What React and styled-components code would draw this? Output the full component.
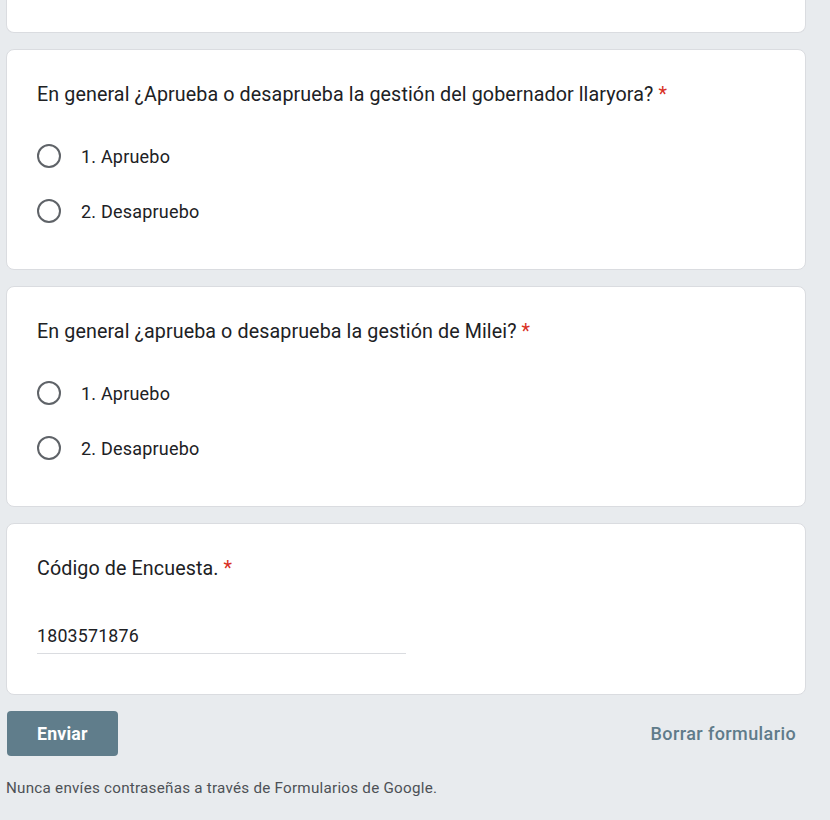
import React from "react";
import styled, { createGlobalStyle } from "styled-components";

const Global = createGlobalStyle`
  html, body { margin: 0; padding: 0; background: #e8ebee; }
  body { font-family: Roboto, "Noto Sans", Arial, sans-serif; color: #202124; }
`;

const Page = styled.div`
  width: 800px;
  padding-left: 6px;
  display: flex;
  flex-direction: column;
  gap: 16px;
`;

const Card = styled.div`
  background: #fff;
  border: 1px solid #dadce0;
  border-radius: 8px;
  box-sizing: border-box;
  padding: 31px 30px 24px 30px;
  display: flex;
  flex-direction: column;
`;

const ClippedCard = styled(Card)`
  height: 33px;
  border-top: none;
  border-top-left-radius: 0;
  border-top-right-radius: 0;
  padding: 0;
`;

const Title = styled.div`
  font-size: 19.7px;
  line-height: 28px;
  letter-spacing: 0.1px;
  color: #202124;
  margin-bottom: ${(p) => p.$mb || 23}px;
`;

const Star = styled.span`
  color: #d93025;
  padding-left: 5px;
`;

const Options = styled.div`
  display: flex;
  flex-direction: column;
  gap: 7px;
  margin-bottom: 10px;
`;

const Option = styled.label`
  display: flex;
  align-items: center;
  height: 48px;
  gap: 20px;
  font-size: 18px;
  letter-spacing: 0.2px;
  color: #202124;
`;

const Radio = styled.span`
  width: 24px;
  height: 24px;
  box-sizing: border-box;
  border: 2px solid #5f6368;
  border-radius: 50%;
  flex-shrink: 0;
`;

const InputWrap = styled.div`
  width: 369px;
  border-bottom: 1px solid #dadce0;
  padding: 4px 0 4px;
  font-size: 17.8px;
  line-height: 26px;
  letter-spacing: 0.2px;
  color: #202124;
  margin-bottom: 16px;
`;

const Actions = styled.div`
  display: flex;
  justify-content: space-between;
  align-items: center;
  padding-left: 1px;
  padding-right: 10px;
`;

const Submit = styled.button`
  width: 111px;
  height: 45px;
  border: none;
  border-radius: 4px;
  background: #607d8b;
  color: #fff;
  font-family: Roboto, Arial, sans-serif;
  font-weight: 700;
  font-size: 17.7px;
  letter-spacing: 0.2px;
  text-align: left;
  padding: 0 0 0 30px;
`;

const Clear = styled.span`
  color: #5f7b8a;
  font-size: 18px;
  font-weight: 500;
  letter-spacing: 0.4px;
`;

const Footer = styled.div`
  font-size: 15.2px;
  letter-spacing: 0.25px;
  color: #4d5156;
  margin-top: 6px;
  line-height: 20px;
`;

const RadioQuestion = ({ title }) => (
  <Card>
    <Title>
      {title}
      <Star>*</Star>
    </Title>
    <Options>
      <Option><Radio />1. Apruebo</Option>
      <Option><Radio />2. Desapruebo</Option>
    </Options>
  </Card>
);

export default function App() {
  return (
    <>
      <Global />
      <Page>
        <ClippedCard />
        <RadioQuestion title="En general ¿Aprueba o desaprueba la gestión del gobernador llaryora?" />
        <RadioQuestion title="En general ¿aprueba o desaprueba la gestión de Milei?" />
        <Card>
          <Title $mb={36}>
            Código de Encuesta.
            <Star>*</Star>
          </Title>
          <InputWrap>1803571876</InputWrap>
        </Card>
        <Actions>
          <Submit>Enviar</Submit>
          <Clear>Borrar formulario</Clear>
        </Actions>
        <Footer>Nunca envíes contraseñas a través de Formularios de Google.</Footer>
      </Page>
    </>
  );
}
